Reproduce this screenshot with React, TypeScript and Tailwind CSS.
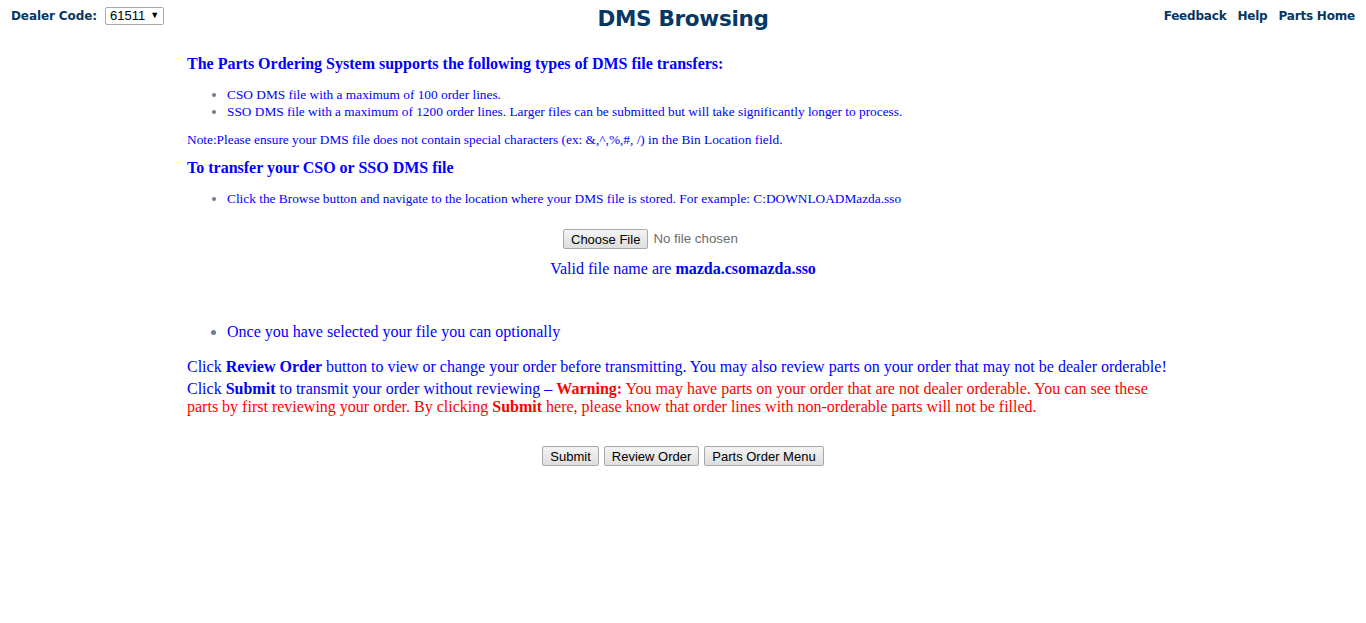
import React from "react";

const serif = "font-['Liberation_Serif','Times_New_Roman',serif]";
const verdana = "font-['DejaVu_Sans','Verdana',sans-serif]";
const arial = "font-['Liberation_Sans',Arial,sans-serif]";

function Btn({ children }: { children: React.ReactNode }) {
  return (
    <button
      className={`${arial} text-[13px] leading-none text-black h-[20px] px-[7px] border border-[#a9a9a9] rounded-[2px] bg-gradient-to-b from-[#f4f4f4] to-[#dedede]`}
    >
      {children}
    </button>
  );
}

export default function App() {
  return (
    <div className="min-h-[623px] bg-white">
      <div className={`${verdana} relative flex items-center justify-between h-[31px] px-[11px] text-[#073763]`}>
        <div className="flex items-center gap-[8px]">
          <span className="text-[12px] font-bold tracking-[-0.1px]">Dealer Code:</span>
          <div className={`${arial} flex items-center gap-[5px] h-[18px] border border-[#a9a9a9] rounded-[2px] pl-[4px] pr-[4px] text-[13px] text-black`}>
            61511 <span className="text-[9px]">▼</span>
          </div>
        </div>
        <div className="absolute left-1/2 -translate-x-1/2 top-[3px] text-[21.5px] font-bold tracking-[-0.3px]">DMS Browsing</div>
        <div className="flex items-center gap-[11px] text-[12px] font-bold tracking-[-0.2px]">
          <span>Feedback</span>
          <span>Help</span>
          <span>Parts Home</span>
        </div>
      </div>

      <div className={`${serif} w-[992px] mx-auto text-[#0000ff]`}>
        <h2 className="mt-[23px] text-[16px] font-bold leading-[20px]">
          The Parts Ordering System supports the following types of DMS file transfers:
        </h2>
        <ul className="list-disc pl-[40px] mt-[12px] text-[13.33px] leading-[17px] marker:text-[#6b7f99]">
          <li>CSO DMS file with a maximum of 100 order lines.</li>
          <li>SSO DMS file with a maximum of 1200 order lines. Larger files can be submitted but will take significantly longer to process.</li>
        </ul>
        <p className="mt-[11px] text-[13.33px] leading-[17px]">
          Note:Please ensure your DMS file does not contain special characters (ex: &amp;,^,%,#, /) in the Bin Location field.
        </p>
        <h2 className="mt-[10px] text-[16px] font-bold leading-[20px]">To transfer your CSO or SSO DMS file</h2>
        <ul className="list-disc pl-[40px] mt-[12px] text-[13.33px] leading-[17px] marker:text-[#6b7f99]">
          <li>Click the Browse button and navigate to the location where your DMS file is stored. For example: C:DOWNLOADMazda.sso</li>
        </ul>
        <div className="flex justify-center mt-[22px]">
          <div className="flex items-center gap-[5px] w-[240px]">
            <Btn>Choose File</Btn>
            <span className={`${arial} text-[13.33px] text-[#6d6d6d]`}>No file chosen</span>
          </div>
        </div>
        <p className="text-center mt-[11px] text-[16px] leading-[18px]">
          Valid file name are <b>mazda.csomazda.sso</b>
        </p>
        <ul className="list-disc pl-[40px] mt-[45px] text-[16px] leading-[18px] marker:text-[#6b7f99]">
          <li>Once you have selected your file you can optionally</li>
        </ul>
        <p className="mt-[17px] text-[16px] leading-[18px]">
          Click <b>Review Order</b> button to view or change your order before transmitting. You may also review parts on your order that may not be dealer orderable!
        </p>
        <p className="mt-[4px] text-[16px] leading-[18px]">
          Click <b>Submit</b> to transmit your order without reviewing – <span className="text-[#ff0000]"><b>Warning:</b> You may have parts on your order that are not dealer orderable. You can see these parts by first reviewing your order. By clicking <b>Submit</b> here, please know that order lines with non-orderable parts will not be filled.</span>
        </p>
        <div className="flex justify-center gap-[5px] mt-[30px]">
          <Btn>Submit</Btn>
          <Btn>Review Order</Btn>
          <Btn>Parts Order Menu</Btn>
        </div>
      </div>
    </div>
  );
}
